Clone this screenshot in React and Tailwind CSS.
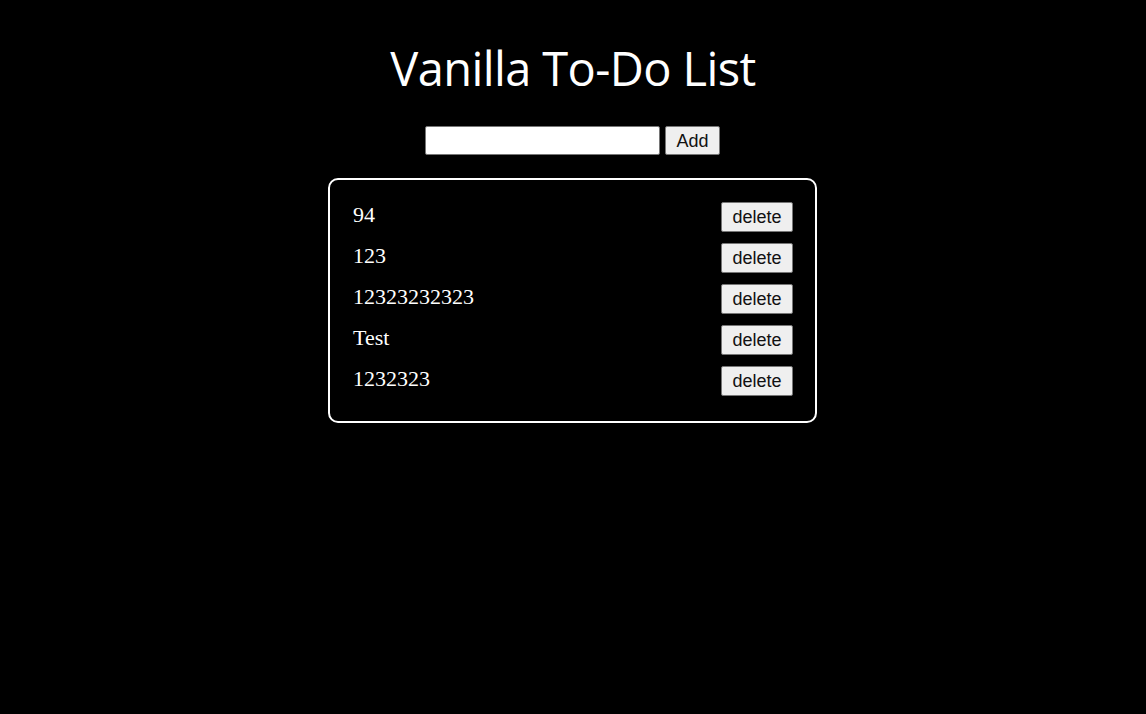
import React, { useState } from "react";

const initialTodos = ["94", "123", "12323232323", "Test", "1232323"];

export default function App() {
  const [todos, setTodos] = useState(initialTodos);
  const [text, setText] = useState("");

  const addTodo = () => {
    if (!text.trim()) return;
    setTodos([...todos, text]);
    setText("");
  };

  return (
    <div className="min-h-[714px] w-full bg-black flex flex-col items-center pt-[37px]">
      <h1 className="text-white text-[47px] leading-[63px] font-medium font-['Open_Sans',sans-serif] tracking-[-0.6px]">
        Vanilla To-Do List
      </h1>

      {/* entrada */}
      <div className="flex gap-[5px] mt-[26px] -ml-[1px]">
        <input
          type="text"
          value={text}
          onChange={(e) => setText(e.target.value)}
          className="w-[235px] h-[29px] bg-white border border-[#767676] rounded-[2px] px-1 text-black outline-none"
        />
        <button
          onClick={addTodo}
          className="w-[55px] h-[29px] pt-[1px] bg-[#efefef] border border-[#767676] rounded-[2px] text-[18px] text-[#111] font-['Liberation_Sans',Arial,sans-serif]"
        >
          Add
        </button>
      </div>

      <ul className="w-[489px] -ml-[1px] mt-[23px] border-2 border-white rounded-[10px] pl-[23px] pr-[22px] pt-[22px] pb-[25px] flex flex-col gap-[11px]">
        {todos.map((todo, i) => (
          <li key={i} className="flex items-center justify-between h-[30px]">
            <span className="text-white text-[22px] leading-none -mt-[5px] font-['Liberation_Serif',serif]">
              {todo}
            </span>
            <button
              onClick={() => setTodos(todos.filter((_, j) => j !== i))}
              className="w-[72px] h-[30px] pt-[1px] bg-[#efefef] border border-[#767676] rounded-[2px] text-[18px] text-[#111] font-['Liberation_Sans',Arial,sans-serif]"
            >
              delete
            </button>
          </li>
        ))}
      </ul>
    </div>
  );
}
